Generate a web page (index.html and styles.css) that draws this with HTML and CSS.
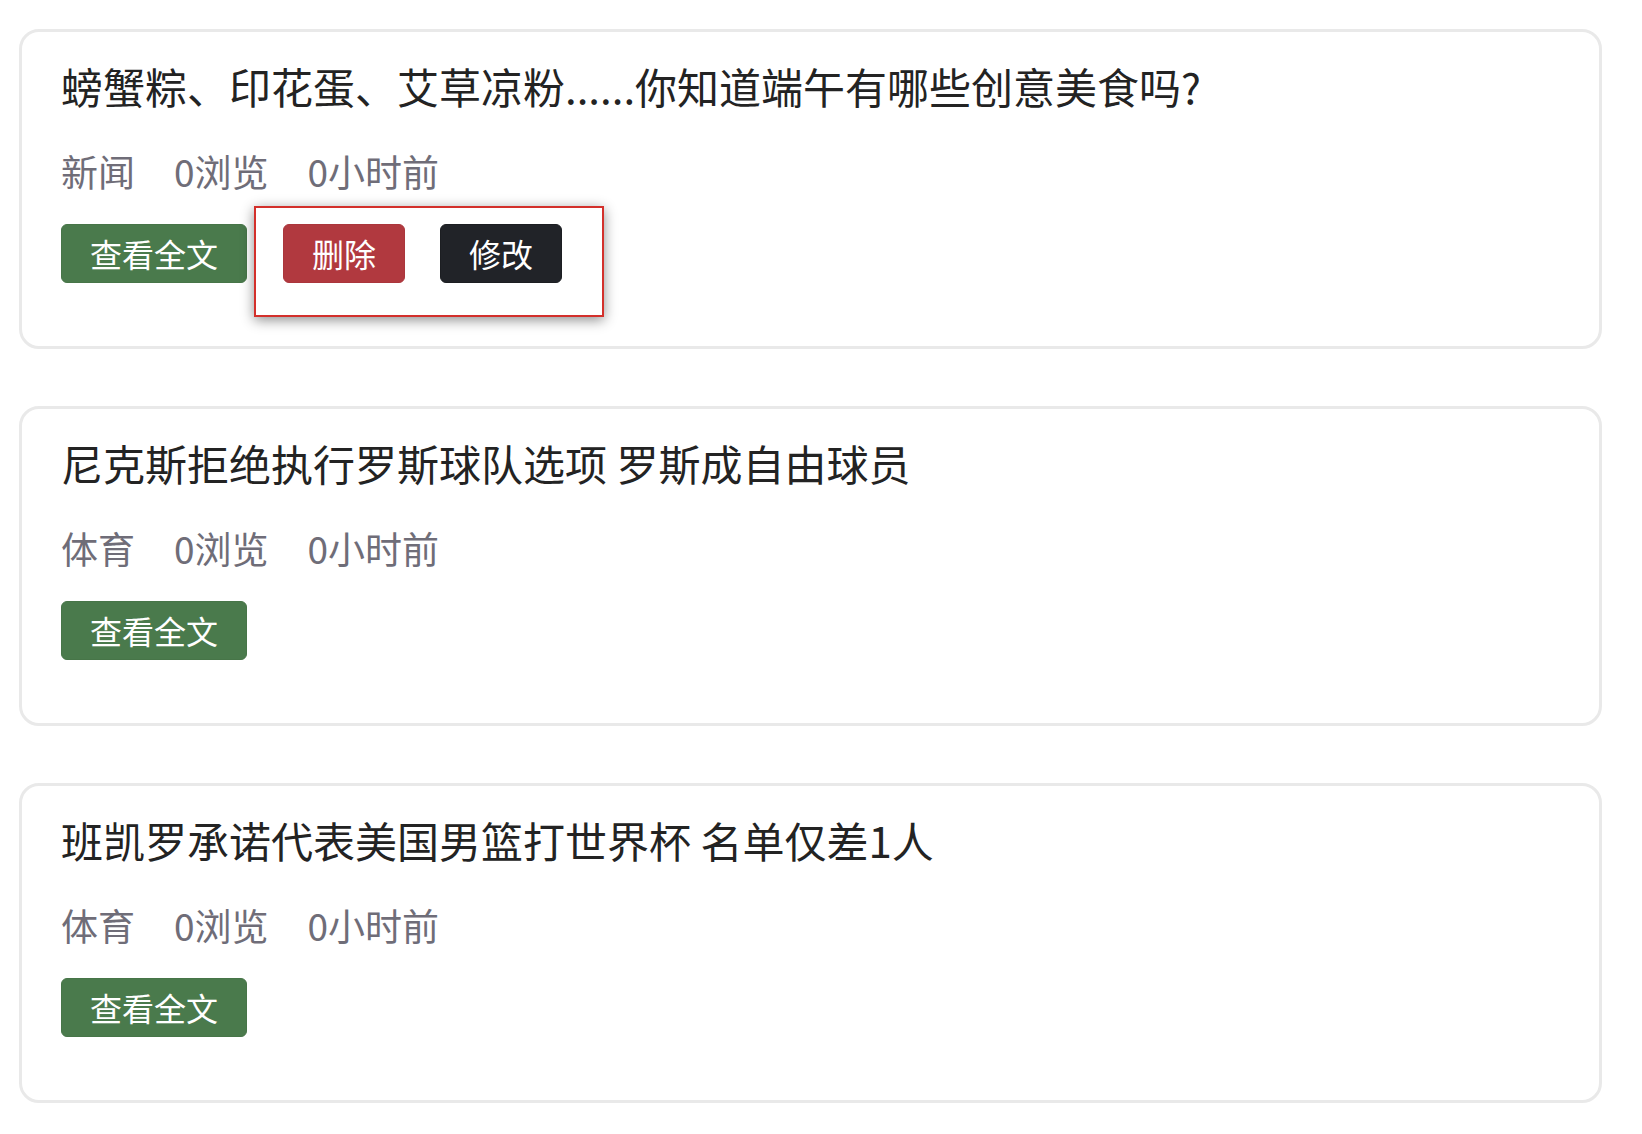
FILE: index.html
```html
<!DOCTYPE html>
<html lang="zh-CN">
<head>
    <meta charset="UTF-8">
    <title>新闻列表</title>
    <link rel="stylesheet" href="styles.css">
</head>
<body>

    <div class="list">
        <div class="card">
            <h5 class="title">螃蟹粽、印花蛋、艾草凉粉......你知道端午有哪些创意美食吗?</h5>
            <p class="meta">
                <span>新闻</span>
                <span>0浏览</span>
                <span>0小时前</span>
            </p>
            <div class="btns">
                <a class="btn btn-success">查看全文</a>
                <a class="btn btn-danger">删除</a>
                <a class="btn btn-dark">修改</a>
                <!-- 标注框 -->
                <div class="mark"></div>
            </div>
        </div>

        <div class="card">
            <h5 class="title">尼克斯拒绝执行罗斯球队选项 罗斯成自由球员</h5>
            <p class="meta">
                <span>体育</span>
                <span>0浏览</span>
                <span>0小时前</span>
            </p>
            <div class="btns">
                <a class="btn btn-success">查看全文</a>
            </div>
        </div>

        <div class="card">
            <h5 class="title">班凯罗承诺代表美国男篮打世界杯 名单仅差1人</h5>
            <p class="meta">
                <span>体育</span>
                <span>0浏览</span>
                <span>0小时前</span>
            </p>
            <div class="btns">
                <a class="btn btn-success">查看全文</a>
            </div>
        </div>
    </div>

</body>
</html>
```

FILE: styles.css
```css
* {
    padding: 0;
    margin: 0;
    box-sizing: border-box;
}
body {
    background-color: #fff;
    font-family: "Noto Sans CJK SC", "Liberation Sans", sans-serif;
    color: #222;
}

.list {
    display: flex;
    flex-direction: column;
    gap: 57px;
    padding: 29px 40px 0 19px;
}

.card {
    height: 320px;
    border: 3px solid #e9e9e9;
    border-radius: 20px;
    padding: 29px 36px 0 39px;
}

.card .title {
    font-size: 42px;
    font-weight: normal;
    line-height: 50px;
    color: #232323;
}

.card .meta {
    display: flex;
    gap: 39px;
    margin-top: 35px;
    font-size: 37px;
    line-height: 50px;
    color: #6f6d78;
}

.btns {
    display: flex;
    gap: 36px;
    margin-top: 28px;
    position: relative; /* 标注框定位 */
}
.btns .btn-dark {
    margin-left: -1px;
}

.btn {
    display: block;
    height: 59px;
    padding: 0 28px;
    border: 1px solid transparent;
    border-radius: 6px;
    font-size: 32px;
    line-height: 57px;
    color: #fff;
    cursor: pointer;
}
.btn-success {
    background-color: #4a7a4c;
    border-color: #477548;
}
.btn-danger {
    background-color: #b1393f;
    border-color: #ab363c;
}
.btn-dark {
    background-color: #212328;
    border-color: #1c1e22;
}

/* 截图里的红色标注 */
.mark {
    position: absolute;
    left: 193px;
    top: -18px;
    width: 350px;
    height: 111px;
    border: 2px solid #d3302b;
    box-shadow: 0 3px 12px rgba(0, 0, 0, 0.45);
    pointer-events: none;
}
```
